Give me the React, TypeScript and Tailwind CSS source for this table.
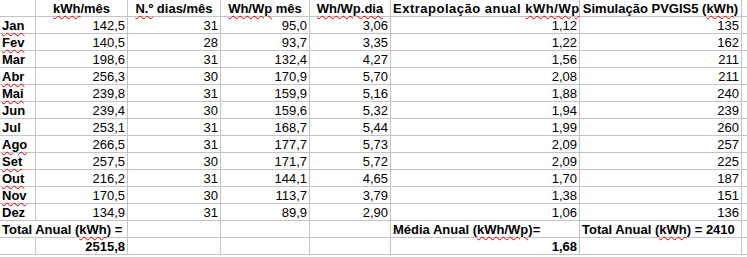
const rows = [
  { m: 'Jan', k: '142,5', d: '31', wm: '95,0', wd: '3,06', ex: '1,12', sim: '135', sp: true },
  { m: 'Fev', k: '140,5', d: '28', wm: '93,7', wd: '3,35', ex: '1,22', sim: '162', sp: true },
  { m: 'Mar', k: '198,6', d: '31', wm: '132,4', wd: '4,27', ex: '1,56', sim: '211', sp: false },
  { m: 'Abr', k: '256,3', d: '30', wm: '170,9', wd: '5,70', ex: '2,08', sim: '211', sp: true },
  { m: 'Mai', k: '239,8', d: '31', wm: '159,9', wd: '5,16', ex: '1,88', sim: '240', sp: true },
  { m: 'Jun', k: '239,4', d: '30', wm: '159,6', wd: '5,32', ex: '1,94', sim: '239', sp: false },
  { m: 'Jul', k: '253,1', d: '31', wm: '168,7', wd: '5,44', ex: '1,99', sim: '260', sp: false },
  { m: 'Ago', k: '266,5', d: '31', wm: '177,7', wd: '5,73', ex: '2,09', sim: '257', sp: true },
  { m: 'Set', k: '257,5', d: '30', wm: '171,7', wd: '5,72', ex: '2,09', sim: '225', sp: true },
  { m: 'Out', k: '216,2', d: '31', wm: '144,1', wd: '4,65', ex: '1,70', sim: '187', sp: true },
  { m: 'Nov', k: '170,5', d: '30', wm: '113,7', wd: '3,79', ex: '1,38', sim: '151', sp: true },
  { m: 'Dez', k: '134,9', d: '31', wm: '89,9', wd: '2,90', ex: '1,06', sim: '136', sp: false },
];

// red squiggle like the spell checker
const Sp = ({ children }: { children: React.ReactNode }) => (
  <span className="underline decoration-wavy decoration-[#e00000] decoration-1 underline-offset-2">{children}</span>
);

const cell = 'h-[17px] border-b border-r border-[#c4c4c4] px-[2px] leading-[17px] whitespace-nowrap overflow-visible';
const num = `${cell} text-right`;
const head = `${cell} text-center font-bold`;

export default function App() {
  return (
    <div
      className="w-[747px] h-[257px] bg-white text-[13px] text-black overflow-hidden"
      style={{ fontFamily: '"Liberation Sans", Arial, sans-serif' }}
    >
      <div className="grid grid-cols-[36px_92px_93px_89px_81px_189px_162px_1fr]">
        {/* header */}
        <div className={cell}></div>
        <div className={head}><Sp>kWh</Sp>/mês</div>
        <div className={head}><Sp>N.º</Sp> dias/mês</div>
        <div className={head}><Sp>Wh/Wp</Sp> mês</div>
        <div className={head}><Sp>Wh/Wp.dia</Sp></div>
        <div className={`${head} tracking-[0.5px]`}>Extrapolação anual <Sp>kWh/Wp</Sp></div>
        <div className={head}>Simulação PVGIS5 (<Sp>kWh</Sp>)</div>
        <div className="h-[17px] border-b border-[#c4c4c4]"></div>

        {rows.map((r) => (
          <div key={r.m} className="contents">
            <div className={`${cell} font-bold`}>{r.sp ? <Sp>{r.m}</Sp> : r.m}</div>
            <div className={num}>{r.k}</div>
            <div className={num}>{r.d}</div>
            <div className={num}>{r.wm}</div>
            <div className={num}>{r.wd}</div>
            <div className={num}>{r.ex}</div>
            <div className={num}>{r.sim}</div>
            <div className="h-[17px] border-b border-[#c4c4c4]"></div>
          </div>
        ))}

        {/* totals */}
        <div className="col-span-2 h-[17px] border-b border-r border-[#c4c4c4] px-[2px] leading-[17px] font-bold whitespace-nowrap">
          Total Anual (<Sp>kWh</Sp>) =
        </div>
        <div className={cell}></div>
        <div className={cell}></div>
        <div className={cell}></div>
        <div className={`${cell} font-bold`}>Média Anual (<Sp>kWh/Wp</Sp>)=</div>
        <div className={`${cell} font-bold`}>Total Anual (<Sp>kWh</Sp>) = 2410</div>
        <div className="h-[17px] border-b border-[#c4c4c4]"></div>

        <div className={cell}></div>
        <div className={`${num} font-bold`}>2515,8</div>
        <div className={cell}></div>
        <div className={cell}></div>
        <div className={cell}></div>
        <div className={`${num} font-bold`}>1,68</div>
        <div className={cell}></div>
        <div className="h-[17px] border-b border-[#c4c4c4]"></div>
      </div>
    </div>
  );
}
